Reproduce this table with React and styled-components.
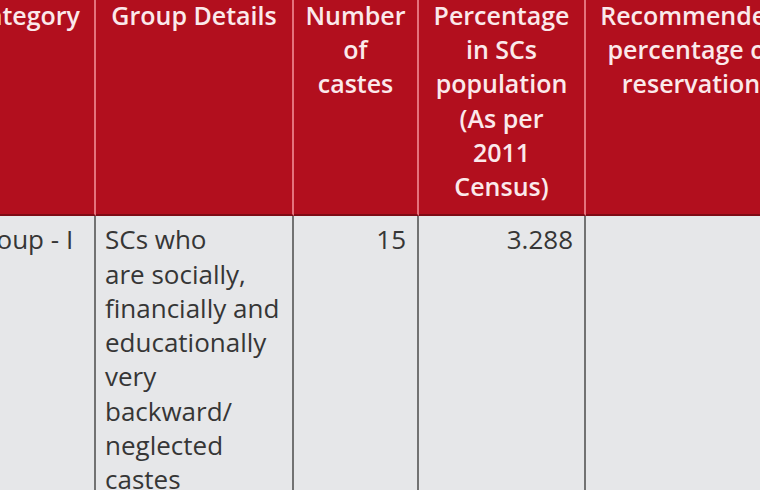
import React from 'react'
import styled, { createGlobalStyle } from 'styled-components'

const GlobalStyle = createGlobalStyle`
  html, body {
    margin: 0;
    padding: 0;
    background: #e6e7e9;
    overflow: hidden;
  }
  body {
    font-family: "Open Sans", "Noto Sans", sans-serif;
  }
`

const columns = [
  { key: 'category', width: 138, title: ['Category'] },
  { key: 'group', width: 198, title: ['Group Details'] },
  { key: 'count', width: 125, title: ['Number', 'of', 'castes'] },
  { key: 'share', width: 167, title: ['Percentage', 'in SCs', 'population', '(As per', '2011', 'Census)'] },
  { key: 'reco', width: 212, title: ['Recommended', 'percentage of', 'reservation'] },
]

const rows = [
  {
    category: ['Group - I'],
    group: [
      'SCs who',
      'are socially,',
      'financially and',
      'educationally',
      'very',
      'backward/',
      'neglected',
      'castes',
    ],
    count: ['15'],
    share: ['3.288'],
    reco: [''],
  },
]

const numeric = { count: true, share: true }

const lines = (parts) =>
  parts.map((p, i) => (
    <React.Fragment key={i}>
      {i > 0 && <br />}
      {p}
    </React.Fragment>
  ))

const App = () => {
  return (
    <>
      <GlobalStyle />
      <Wrapper>
        <Table>
          <colgroup>
            {columns.map((c) => (
              <col key={c.key} style={{ width: c.width }} />
            ))}
          </colgroup>
          <thead>
            <tr>
              {columns.map((c) => (
                <HeadCell key={c.key}>{lines(c.title)}</HeadCell>
              ))}
            </tr>
          </thead>
          <tbody>
            {rows.map((r, i) => (
              <tr key={i}>
                {columns.map((c) => (
                  <BodyCell key={c.key} $numeric={numeric[c.key]}>
                    {lines(r[c.key])}
                  </BodyCell>
                ))}
              </tr>
            ))}
          </tbody>
        </Table>
      </Wrapper>
    </>
  )
}

export default App

// the screenshot is a crop of a wider table, so the table starts off-frame
const Wrapper = styled.div`
  margin: -10px 0 0 -42px;
  width: 900px;
`

const Table = styled.table`
  table-layout: fixed;
  border-collapse: separate;
  border-spacing: 0;
  width: 840px;
`

const HeadCell = styled.th`
  background: #b20f1e;
  color: #fbe9eb;
  font-size: 25px;
  font-weight: 600;
  line-height: 34.2px;
  text-align: center;
  vertical-align: top;
  padding: 8px 10px 11px;
  border-right: 2px solid #e4737d;
  border-bottom: 2px solid #7e0b15;
`

const BodyCell = styled.td`
  background: #e6e7e9;
  color: #363636;
  font-size: 26px;
  font-weight: 400;
  line-height: 34.3px;
  text-align: ${(p) => (p.$numeric ? 'right' : 'left')};
  vertical-align: top;
  padding: 6px 11px 6px 9px;
  border-right: 2px solid #727272;
  white-space: nowrap;
`
